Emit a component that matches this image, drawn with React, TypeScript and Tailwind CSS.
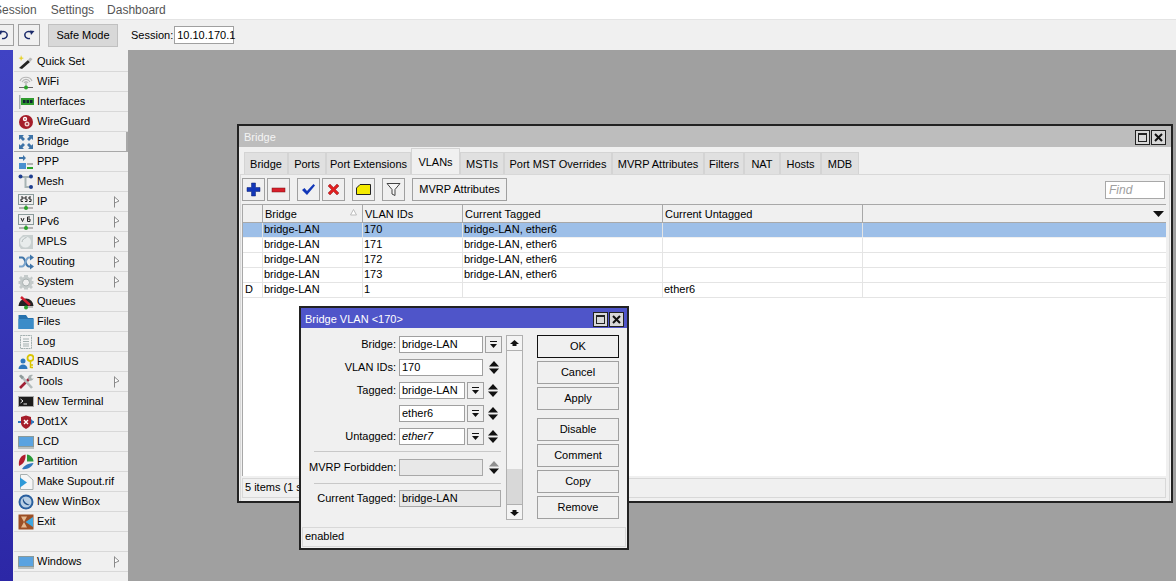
import React from 'react';

// --- small pictures used in the side menu ---
const Arrow = () => (
  <svg width="6" height="12" viewBox="0 0 6 12"><path d="M0.500 0.500V11.500M0.500 1L5 5L0.500 7" fill="#fff" stroke="#8a8a8a" strokeWidth="1" /></svg>
);

const icons: Record<string, React.ReactNode> = {
  quick: (
    <svg width="16" height="16" viewBox="0 0 16 16"><path d="M1 14L10 6L12 8L4 15Z" fill="#222" /><path d="M10 6L12 3.500L14.500 5L12 8Z" fill="#b9b9b9" /><path d="M3 1L4 3.500L6 4L4 5L3 7L2.400 5L0.500 4L2.500 3.500Z" fill="#e6d22e" /></svg>
  ),
  wifi: (
    <svg width="16" height="16" viewBox="0 0 16 16" fill="none"><path d="M2 7C4 2 12 2 14 7M4 8C6 4.500 10 4.500 12 8M6 9C7 7 9 7 10 9" stroke="#b5b5b5" strokeWidth="1.100" /><path d="M8 8V14" stroke="#9a9a9a" /><path d="M1 13.500H15" stroke="#666" /><circle cx="8" cy="13.500" r="2" fill="#2aa32a" /></svg>
  ),
  interfaces: (
    <svg width="16" height="16" viewBox="0 0 16 16"><rect x="1" y="1" width="1.500" height="14" fill="#a8b0b0" /><rect x="3" y="4" width="13" height="7" fill="#2f9a2f" /><rect x="5" y="6" width="2.500" height="3" fill="#123" /><rect x="8.500" y="6" width="2.500" height="3" fill="#123" /><rect x="12" y="6" width="2.500" height="3" fill="#123" /></svg>
  ),
  wireguard: (
    <svg width="16" height="16" viewBox="0 0 16 16"><circle cx="8" cy="8" r="7" fill="#a51d2a" /><circle cx="7" cy="5" r="2.200" fill="#fff" /><circle cx="9" cy="10" r="2.500" fill="#f2d0d0" /><circle cx="7" cy="5" r="0.800" fill="#a51d2a" /><circle cx="9" cy="10" r="1" fill="#a51d2a" /></svg>
  ),
  bridge: (
    <svg width="16" height="16" viewBox="0 0 16 16" fill="#3f74a8"><path d="M1 1H6L4.500 2.500L7 5L5 7L2.500 4.500L1 6Z" /><path d="M15 1V6L13.500 4.500L11 7L9 5L11.500 2.500L10 1Z" /><path d="M1 15V10L2.500 11.500L5 9L7 11L4.500 13.500L6 15Z" /><path d="M15 15H10L11.500 13.500L9 11L11 9L13.500 11.500L15 10Z" /></svg>
  ),
  ppp: (
    <svg width="16" height="16" viewBox="0 0 16 16"><path d="M1 3H5V1L8 4L5 7V5H1Z" fill="#3f74a8" /><rect x="1" y="9" width="7" height="6" fill="#4a90d0" /><rect x="9" y="9" width="6" height="2" fill="#b0b0b0" /><rect x="9" y="13" width="6" height="2" fill="#2aa32a" /></svg>
  ),
  mesh: (
    <svg width="16" height="16" viewBox="0 0 16 16"><path d="M2 3H13M7.500 3V13H13" stroke="#a8b4b4" strokeWidth="2" fill="none" /><circle cx="2.500" cy="2.500" r="2" fill="#1f3f8f" /><circle cx="13" cy="2.500" r="2" fill="#1f3f8f" /><circle cx="13" cy="13" r="2" fill="#1f3f8f" /></svg>
  ),
  ip: (
    <svg width="16" height="16" viewBox="0 0 16 16"><rect x="0.500" y="0.500" width="15" height="10" fill="#eee" stroke="#8a9a9a" /><path d="M3 3H5V5H3V7.500H5M7 3H9M7 3V5H9V7.500H7M11 3H13M11 3V5H13V7.500H11" stroke="#222" fill="none" /><path d="M8 11V14M1 14H15" stroke="#777" /><circle cx="8" cy="14" r="2" fill="#2aa32a" /></svg>
  ),
  ipv6: (
    <svg width="16" height="16" viewBox="0 0 16 16"><rect x="0.500" y="0.500" width="15" height="10" fill="#eee" stroke="#8a9a9a" /><path d="M3 4L4.500 7.500L6 4M12 3H9.500V7.500H12V5H9.500" stroke="#222" fill="none" /><path d="M8 11V14M1 14H15" stroke="#777" /><circle cx="8" cy="14" r="2" fill="#2aa32a" /></svg>
  ),
  mpls: (
    <svg width="16" height="16" viewBox="0 0 16 16"><path d="M5 1H15V15H3L1 12V5Z" fill="#c8cfcf" /><circle cx="7.500" cy="8" r="5.500" fill="#e8ecec" /><path d="M4 8C4.500 5.500 6 4 8.500 3.500" stroke="#b0b8b8" fill="none" /></svg>
  ),
  routing: (
    <svg width="16" height="16" viewBox="0 0 16 16" fill="none"><path d="M1 3.500H4C8 3.500 7 12.500 11 12.500H13" stroke="#3f74a8" strokeWidth="2.200" /><path d="M1 12.500H4C8 12.500 7 3.500 11 3.500H13" stroke="#7aa4cc" strokeWidth="2.200" /><path d="M12 0.500L16 3.500L12 6.500ZM12 9.500L16 12.500L12 15.500Z" fill="#3f74a8" /></svg>
  ),
  system: (
    <svg width="16" height="16" viewBox="0 0 16 16"><path d="M6 1H10V3L12 4L13.500 2.500L15 4L13.500 6L14 7H15.500V10H14L13.500 11.500L15 13L13 15L11.500 13.500L10 14V15.500H6V14L4.500 13.500L3 15L1 13L2.500 11.500L2 10H0.500V7H2L2.500 6L1 4L3 2L4.500 3.500L6 3Z" fill="#c4caca" /><circle cx="8" cy="8.500" r="3.500" fill="#efefef" stroke="#a8b0b0" /></svg>
  ),
  queues: (
    <svg width="16" height="16" viewBox="0 0 16 16"><path d="M0.500 12A7.500 7.500 0 0 1 15.500 12Z" fill="#222" /><path d="M3 3L12 11" stroke="#d01f2f" strokeWidth="2.400" /><path d="M8 13H15" stroke="#888" /><circle cx="8" cy="13.500" r="2" fill="#2aa32a" /></svg>
  ),
  files: (
    <svg width="16" height="16" viewBox="0 0 16 16"><path d="M0.500 1H8L10 4H15.500V15H0.500Z" fill="#2672ad" /><path d="M0.500 5H15.500V15H0.500Z" fill="#3b8cc8" /></svg>
  ),
  log: (
    <svg width="16" height="16" viewBox="0 0 16 16"><rect x="2.500" y="1.500" width="11" height="13" fill="#f4f4f4" stroke="#a4b0b0" strokeDasharray="2 0.500" /><path d="M5 5H11M5 7.500H11M5 10H11M5 12H11" stroke="#a4b0b0" /></svg>
  ),
  radius: (
    <svg width="16" height="16" viewBox="0 0 16 16"><circle cx="5" cy="7" r="2.500" fill="#2f78bd" /><path d="M0.500 15C0.500 9 9.500 9 9.500 15Z" fill="#2f78bd" /><circle cx="12.500" cy="4" r="3" fill="none" stroke="#d9c400" strokeWidth="1.800" /><path d="M12.500 7V14M12.500 11H15M12.500 13.500H15" stroke="#d9c400" strokeWidth="1.500" /></svg>
  ),
  tools: (
    <svg width="16" height="16" viewBox="0 0 16 16"><path d="M2 14L12 4" stroke="#a01f35" strokeWidth="2.600" /><path d="M4 3L14 14" stroke="#b4bcbc" strokeWidth="2.600" /><path d="M1 2L3 0.500L6 3L4 5.500Z" fill="#8f9a9a" /><path d="M10 4C10 1 13 0 15 1L13 3L14 5L15.500 4C15.500 6 13 7.500 11 6.500Z" fill="#a8b0b0" /></svg>
  ),
  terminal: (
    <svg width="16" height="16" viewBox="0 0 16 16"><rect x="0.500" y="2.500" width="15" height="10" fill="#1c1c1c" stroke="#a8a8a8" /><path d="M2.500 5L5 7L2.500 9M5.500 10H9" stroke="#eee" fill="none" /></svg>
  ),
  dot1x: (
    <svg width="16" height="16" viewBox="0 0 16 16"><path d="M0 8H3M13 8H16" stroke="#2f78bd" strokeWidth="2" /><path d="M13 5L16 8L13 11Z" fill="#2f78bd" /><path d="M3 3L8 1.500L13 3V9C13 12 10 14 8 15C6 14 3 12 3 9Z" fill="#a51d2a" /><path d="M6 6L10 10M10 6L6 10" stroke="#fff" strokeWidth="1.400" /></svg>
  ),
  lcd: (
    <svg width="16" height="16" viewBox="0 0 16 16"><rect x="0.500" y="2.500" width="15" height="10" fill="#5aa3e0" stroke="#8a9a9a" /><path d="M0 14H16" stroke="#b8c0c0" strokeWidth="2" /></svg>
  ),
  partition: (
    <svg width="16" height="16" viewBox="0 0 16 16"><path d="M1 12C0 6 3 1 7.500 0.500C8 5 6 10 1 12Z" fill="#b01f2f" /><path d="M9 0.500C12.500 1 15.500 4 15.500 7.500H9Z" fill="#2a9a3a" /><path d="M15.500 9C14 13 9 16 4 15C6 12 9 9.500 15.500 9Z" fill="#2f78bd" /></svg>
  ),
  supout: (
    <svg width="16" height="16" viewBox="0 0 16 16"><path d="M2.500 0.500H9L15 6V15.500H2.500Z" fill="#f6f6f6" stroke="#a8b0b0" /><path d="M2 3.500L9 8.500L2 13.500Z" fill="#2f9ad8" /></svg>
  ),
  winbox: (
    <svg width="16" height="16" viewBox="0 0 16 16"><circle cx="8" cy="8" r="7.500" fill="#2a5f9e" /><circle cx="8" cy="8" r="5.500" fill="#b9cfe4" /><path d="M5 4C4 8 7 12 12 11C9 10 6 8 5 4Z" fill="#1f4f88" /></svg>
  ),
  exit: (
    <svg width="16" height="16" viewBox="0 0 16 16"><rect x="0.500" y="0.500" width="15" height="15" fill="#9c4f25" /><path d="M3 2.500H9L6 8L9 13.500H3L6 8Z" fill="#e4b990" /><path d="M15 3V13L7.500 8Z" fill="#3fa6e0" /></svg>
  ),
};

type MenuEntry = { label: string; icon?: string; arrow?: boolean; active?: boolean };

const menu: MenuEntry[] = [
  { label: 'Quick Set', icon: 'quick' },
  { label: 'WiFi', icon: 'wifi' },
  { label: 'Interfaces', icon: 'interfaces' },
  { label: 'WireGuard', icon: 'wireguard' },
  { label: 'Bridge', icon: 'bridge', active: true },
  { label: 'PPP', icon: 'ppp' },
  { label: 'Mesh', icon: 'mesh' },
  { label: 'IP', icon: 'ip', arrow: true },
  { label: 'IPv6', icon: 'ipv6', arrow: true },
  { label: 'MPLS', icon: 'mpls', arrow: true },
  { label: 'Routing', icon: 'routing', arrow: true },
  { label: 'System', icon: 'system', arrow: true },
  { label: 'Queues', icon: 'queues' },
  { label: 'Files', icon: 'files' },
  { label: 'Log', icon: 'log' },
  { label: 'RADIUS', icon: 'radius' },
  { label: 'Tools', icon: 'tools', arrow: true },
  { label: 'New Terminal', icon: 'terminal' },
  { label: 'Dot1X', icon: 'dot1x' },
  { label: 'LCD', icon: 'lcd' },
  { label: 'Partition', icon: 'partition' },
  { label: 'Make Supout.rif', icon: 'supout' },
  { label: 'New WinBox', icon: 'winbox' },
  { label: 'Exit', icon: 'exit' },
  { label: '' },
  { label: 'Windows', icon: 'lcd', arrow: true },
];

const tabs = [
  { label: 'Bridge', w: 'w-[44px]' },
  { label: 'Ports', w: 'w-[38px]' },
  { label: 'Port Extensions', w: 'w-[85px]' },
  { label: 'VLANs', w: 'w-[49px]', active: true },
  { label: 'MSTIs', w: 'w-[44px]' },
  { label: 'Port MST Overrides', w: 'w-[108px]' },
  { label: 'MVRP Attributes', w: 'w-[92px]' },
  { label: 'Filters', w: 'w-[40px]' },
  { label: 'NAT', w: 'w-[36px]' },
  { label: 'Hosts', w: 'w-[41px]' },
  { label: 'MDB', w: 'w-[38px]' },
];

const rows = [
  { flag: '', bridge: 'bridge-LAN', ids: '170', tagged: 'bridge-LAN, ether6', untagged: '', selected: true },
  { flag: '', bridge: 'bridge-LAN', ids: '171', tagged: 'bridge-LAN, ether6', untagged: '' },
  { flag: '', bridge: 'bridge-LAN', ids: '172', tagged: 'bridge-LAN, ether6', untagged: '' },
  { flag: '', bridge: 'bridge-LAN', ids: '173', tagged: 'bridge-LAN, ether6', untagged: '' },
  { flag: 'D', bridge: 'bridge-LAN', ids: '1', tagged: '', untagged: 'ether6' },
];

const ToolBtn = ({ children, className = 'w-[23px]' }: { children: React.ReactNode; className?: string }) => (
  <div className={`flex h-[23px] items-center justify-center border border-[#a0a0a0] bg-[#f0f0f0] ${className}`}>{children}</div>
);

const WinBtns = () => (
  <div className="flex gap-px">
    <div className="flex h-[15px] w-[15px] items-center justify-center border border-[#222] bg-[#d8d8d8]">
      <div className="h-[9px] w-[9px] border border-t-2 border-[#222]" />
    </div>
    <div className="flex h-[15px] w-[15px] items-center justify-center border border-[#222] bg-[#d8d8d8]">
      <svg width="9" height="9" viewBox="0 0 9 9"><path d="M1 1L8 8M8 1L1 8" stroke="#111" strokeWidth="2" /></svg>
    </div>
  </div>
);

const Drop = () => (
  <div className="flex h-[17px] w-[17px] items-center justify-center border border-[#a0a0a0] bg-[#f0f0f0]">
    <svg width="9" height="9" viewBox="0 0 9 9"><path d="M1 1H8V2H1ZM4.500 8L1 4H8Z" fill="#111" /></svg>
  </div>
);

const UpDown = ({ dim = false }: { dim?: boolean }) => (
  <div className="flex h-[17px] w-[17px] items-center justify-center">
    <svg width="10" height="13" viewBox="0 0 10 13"><path d="M5 0L10 5.500H0Z" fill={dim ? '#8f8f8f' : '#111'} /><path d="M5 13L10 7.500H0Z" fill="#111" /></svg>
  </div>
);

const Field = ({ value, className = 'w-[84px]', italic = false, disabled = false }: { value: string; className?: string; italic?: boolean; disabled?: boolean }) => (
  <div className={`h-[17px] border px-[2px] leading-[15px] ${disabled ? 'border-[#a8a8a8] bg-[#e8e8e8]' : 'border-[#a0a0a0] bg-white'} ${italic ? 'italic' : ''} ${className}`}>{value}</div>
);

const FormRow = ({ label, children }: { label: string; children?: React.ReactNode }) => (
  <div className="flex h-[17px] items-center">
    <div className="w-[90px] whitespace-nowrap pr-[3px] text-right">{label}</div>
    {children}
  </div>
);

const DlgBtn = ({ label, isDefault = false }: { label: string; isDefault?: boolean }) => (
  <div className={`flex h-[23px] w-[82px] items-center justify-center border bg-[#f0f0f0] ${isDefault ? 'border-[#111]' : 'border-[#a0a0a0]'}`}>{label}</div>
);

export default function App() {
  return (
    <div className="flex h-[581px] w-[1176px] flex-col overflow-hidden bg-[#f0f0f0] font-[Liberation_Sans,sans-serif] text-[11px] text-black">
      {/* top menu */}
      <div className="ml-[-6px] flex h-[19px] items-center gap-[14px] bg-white text-[12px] text-[#555]">
        <span>Session</span>
        <span>Settings</span>
        <span className="ml-[-1px]">Dashboard</span>
      </div>

      {/* toolbar */}
      <div className="flex h-[31px] items-center border-t border-[#e4e4e4]">
        <div className="ml-[-8px] flex h-[22px] w-[22px] items-center justify-center border border-[#a0a0a0]">
          <svg width="12" height="12" viewBox="0 0 12 12" fill="none"><path d="M3 3.500C7 1 11 3.500 10 7C9.500 9 7 10 5 9.500" stroke="#1a2a6a" strokeWidth="1.400" /><path d="M0.500 2L5 1.500L4 6Z" fill="#1a2a6a" /></svg>
        </div>
        <div className="ml-[4px] flex h-[22px] w-[22px] items-center justify-center border border-[#a0a0a0]">
          <svg width="12" height="12" viewBox="0 0 12 12" fill="none"><path d="M9 3.500C5 1 1 3.500 2 7C2.500 9 5 10 7 9.500" stroke="#1a2a6a" strokeWidth="1.400" /><path d="M11.500 2L7 1.500L8 6Z" fill="#1a2a6a" /></svg>
        </div>
        <div className="ml-[8px] flex h-[23px] w-[70px] items-center justify-center border border-[#c0c0c0] bg-[#d8d8d8]">Safe Mode</div>
        <span className="ml-[13px]">Session:</span>
        <div className="ml-px h-[18px] w-[60px] border border-[#a0a0a0] bg-white px-[2px] leading-[16px]">10.10.170.1</div>
      </div>

      <div className="flex min-h-0 flex-1">
        {/* left strip */}
        <div className="w-[13px] bg-gradient-to-b from-[#4043c4] to-[#2c27a6]" />

        {/* side menu */}
        <div className="w-[115px] pl-px pt-[2px]">
          {menu.map((m, i) => (
            <div
              key={i}
              className={`flex h-[20px] items-center border-b ${m.active ? 'border-r-2 border-[#a8a8a8] border-b-[#a8a8a8]' : 'border-[#d8d8d8] pr-[2px]'}`}
            >
              <div className="flex w-[22px] shrink-0 justify-center pl-[1px]">{m.icon ? icons[m.icon] : null}</div>
              <span className="ml-[1px] flex-1">{m.label}</span>
              {m.arrow ? <div className="mr-[6px]"><Arrow /></div> : null}
            </div>
          ))}
        </div>

        {/* workspace, windows sit freely on it */}
        <div className="relative flex-1 bg-[#a0a0a0]">
          {/* Bridge window */}
          <div className="absolute left-[109px] top-[74px] flex h-[379px] w-[936px] flex-col border-2 border-[#222] bg-[#f0f0f0]">
            <div className="flex h-[21px] items-center justify-between bg-[#bdbdbd] pl-[5px] pr-[5px] pt-[2px] text-[#f4f4f4]">
              <span>Bridge</span>
              <WinBtns />
            </div>
            <div className="flex h-[27px] items-end pl-[5px]">
              {tabs.map(t => (
                <div
                  key={t.label}
                  className={`flex items-center justify-center border border-b-0 border-[#d4d4d4] pt-[2px] ${t.w} ${t.active ? 'h-[26px] bg-[#f0f0f0]' : 'h-[22px] bg-[#e0e0e0]'}`}
                >
                  {t.label}
                </div>
              ))}
            </div>
            <div className="mx-px flex min-h-0 flex-1 flex-col border-l border-r border-t border-[#d8d8d8]">
              {/* actions */}
              <div className="flex h-[29px] items-center pl-px pr-[4px]">
                <ToolBtn><svg width="15" height="15" viewBox="0 0 15 15"><path d="M5.500 1H9.500V5.500H14V9.500H9.500V14H5.500V9.500H1V5.500H5.500Z" fill="#1237b8" stroke="#0a1f70" strokeWidth="0.500" /></svg></ToolBtn>
                <ToolBtn className="ml-[2px] w-[23px]"><svg width="15" height="6" viewBox="0 0 15 6"><rect x="1" y="1" width="13" height="4" fill="#d81f2a" stroke="#7a1016" strokeWidth="0.500" /></svg></ToolBtn>
                <ToolBtn className="ml-[7px] w-[23px]"><svg width="15" height="13" viewBox="0 0 15 13"><path d="M1 7L3.500 5L6 8L12.500 1L14 2.500L6 12Z" fill="#1237b8" /></svg></ToolBtn>
                <ToolBtn className="ml-[2px] w-[23px]"><svg width="13" height="13" viewBox="0 0 13 13"><path d="M1 3L3 1L6.500 4.500L10 1L12 3L8.500 6.500L12 10L10 12L6.500 8.500L3 12L1 10L4.500 6.500Z" fill="#e01f1f" stroke="#7a1016" strokeWidth="0.400" /></svg></ToolBtn>
                <ToolBtn className="ml-[7px] w-[23px]"><svg width="17" height="13" viewBox="0 0 17 13"><path d="M5 1.500H15.500V11.500H1.500V5Z" fill="#f4ea00" stroke="#222" /></svg></ToolBtn>
                <ToolBtn className="ml-[7px] w-[23px]"><svg width="15" height="15" viewBox="0 0 15 15"><path d="M1 1.500H14L9 7.500V13.500L6 12V7.500Z" fill="#f6f6f6" stroke="#444" /></svg></ToolBtn>
                <ToolBtn className="ml-[7px] w-[95px]">MVRP Attributes</ToolBtn>
                <div className="ml-auto h-[18px] w-[60px] border border-[#a8a8a8] bg-white px-[3px] text-[12px] italic leading-[16px] text-[#a0a0a0]">Find</div>
              </div>

              {/* table */}
              <div className="relative mx-px mr-[3px] flex min-h-0 flex-1 flex-col border-l border-t border-[#a8a8a8] bg-white">
                <div className="flex h-[18px] border-b border-[#a8a8a8] bg-[#f0f0f0]">
                  <div className="w-[20px] border-r border-[#a8a8a8]" />
                  <div className="relative w-[100px] border-r border-[#a8a8a8] pl-[2px] leading-[18px]">
                    Bridge
                    <svg className="absolute right-[5px] top-[4px]" width="7" height="7" viewBox="0 0 7 7"><path d="M3.500 0.500L6.500 6H0.500Z" fill="#fff" stroke="#bbb" /></svg>
                  </div>
                  <div className="w-[100px] border-r border-[#a8a8a8] pl-[2px] leading-[18px]">VLAN IDs</div>
                  <div className="w-[200px] border-r border-[#a8a8a8] pl-[2px] leading-[18px]">Current Tagged</div>
                  <div className="w-[200px] border-r border-[#a8a8a8] pl-[2px] leading-[18px]">Current Untagged</div>
                  <div className="flex flex-1 items-center justify-end pr-[2px]">
                    <svg width="11" height="6" viewBox="0 0 11 6"><path d="M0 0H11L5.500 6Z" fill="#111" /></svg>
                  </div>
                </div>
                {rows.map(r => (
                  <div key={r.ids} className={`flex h-[15px] border-b leading-[13px] ${r.selected ? 'border-[#f0f0f0] bg-[#9dbfe8]' : 'border-[#e4e4e4]'}`}>
                    <div className="w-[20px] border-r border-[#e4e4e4] pl-[2px]">{r.flag}</div>
                    <div className="w-[100px] border-r border-[#e4e4e4] pl-px">{r.bridge}</div>
                    <div className="w-[100px] border-r border-[#e4e4e4] pl-px">{r.ids}</div>
                    <div className="w-[200px] border-r border-[#e4e4e4] pl-px">{r.tagged}</div>
                    <div className="w-[200px] border-r border-[#e4e4e4] pl-px">{r.untagged}</div>
                    <div className="flex-1" />
                  </div>
                ))}
                <div className="flex-1" />
              </div>

              {/* status */}
              <div className="mx-px mb-[3px] mr-[3px] mt-[2px] h-[20px] border border-[#d8d8d8] pl-[2px] leading-[17px]">5 items (1 selected)</div>
            </div>
          </div>

          {/* Bridge VLAN dialog */}
          <div className="absolute left-[171px] top-[256px] flex h-[244px] w-[330px] flex-col border-2 border-[#222] bg-[#f0f0f0]">
            <div className="flex h-[20px] items-center justify-between bg-[#4f55c9] pl-[4px] pr-[3px] pt-[2px] text-white">
              <span>Bridge VLAN &lt;170&gt;</span>
              <WinBtns />
            </div>
            <div className="flex flex-1 pl-[8px] pt-[7px]">
              {/* form */}
              <div className="flex h-[173px] w-[192px] flex-col pt-px">
                <div className="flex h-[23px] items-start">
                  <FormRow label="Bridge:"><Field value="bridge-LAN" /><div className="ml-[2px]"><Drop /></div></FormRow>
                </div>
                <div className="flex h-[23px] items-start">
                  <FormRow label="VLAN IDs:"><Field value="170" /><div className="ml-[2px]"><UpDown /></div></FormRow>
                </div>
                <div className="flex h-[23px] items-start">
                  <FormRow label="Tagged:"><Field value="bridge-LAN" className="w-[66px]" /><div className="ml-[2px]"><Drop /></div><UpDown /></FormRow>
                </div>
                <div className="flex h-[23px] items-start">
                  <FormRow label=""><Field value="ether6" className="w-[66px]" /><div className="ml-[2px]"><Drop /></div><UpDown /></FormRow>
                </div>
                <div className="flex h-[23px] items-start">
                  <FormRow label="Untagged:"><Field value="ether7" className="w-[66px]" italic /><div className="ml-[2px]"><Drop /></div><UpDown /></FormRow>
                </div>
                <div className="mb-[7px] ml-[5px] mt-0 border-t border-[#c8c8c8]" />
                <div className="flex h-[17px] items-start">
                  <FormRow label="MVRP Forbidden:"><Field value="" disabled /><div className="ml-[2px]"><UpDown dim /></div></FormRow>
                </div>
                <div className="mb-[6px] ml-[5px] mt-[7px] border-t border-[#c8c8c8]" />
                <div className="flex h-[17px] items-start">
                  <FormRow label="Current Tagged:"><Field value="bridge-LAN" className="w-[102px]" disabled /></FormRow>
                </div>
              </div>

              {/* scroll bar */}
              <div className="ml-[5px] flex h-[185px] w-[17px] flex-col border border-[#b0b0b0] bg-[#f4f4f4]">
                <div className="flex h-[15px] items-center justify-center border-b border-[#b0b0b0]">
                  <svg width="9" height="7" viewBox="0 0 9 7"><path d="M4.500 0L9 4H6.500V6H2.500V4H0Z" fill="#111" /></svg>
                </div>
                <div className="h-[118px]" />
                <div className="flex-1 bg-[#d8d8d8]" />
                <div className="flex h-[15px] items-center justify-center border-t border-[#b0b0b0]">
                  <svg width="9" height="7" viewBox="0 0 9 7"><path d="M4.500 7L9 3H6.500V1H2.500V3H0Z" fill="#111" /></svg>
                </div>
              </div>

              {/* buttons */}
              <div className="ml-[14px] flex flex-col">
                <DlgBtn label="OK" isDefault />
                <div className="mt-[3px]"><DlgBtn label="Cancel" /></div>
                <div className="mt-[3px]"><DlgBtn label="Apply" /></div>
                <div className="mt-[8px]"><DlgBtn label="Disable" /></div>
                <div className="mt-[3px]"><DlgBtn label="Comment" /></div>
                <div className="mt-[3px]"><DlgBtn label="Copy" /></div>
                <div className="mt-[3px]"><DlgBtn label="Remove" /></div>
              </div>
            </div>
            <div className="mx-[1px] mb-[1px] h-[20px] border border-[#d8d8d8] pl-[2px] leading-[17px]">enabled</div>
          </div>
        </div>
      </div>
    </div>
  );
}
